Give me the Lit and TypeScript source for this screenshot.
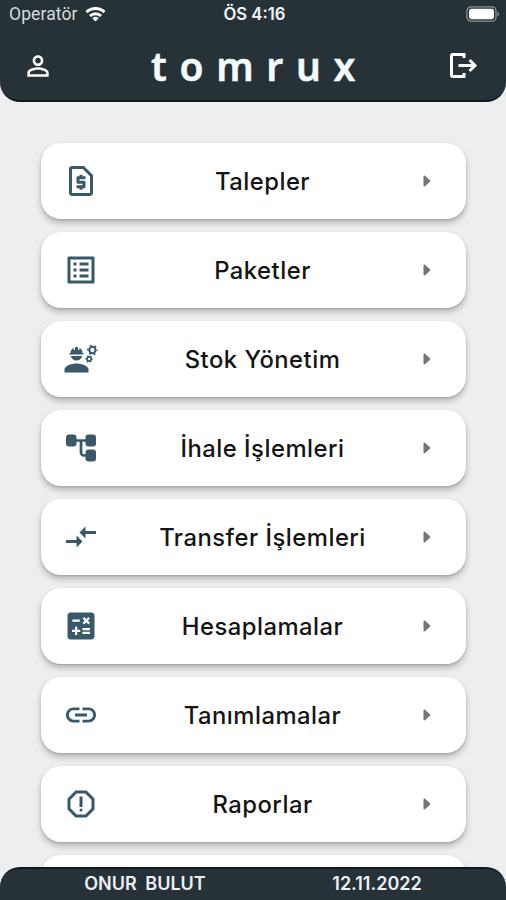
import { LitElement, html, svg, css } from "lit";
import { customElement } from "lit/decorators.js";

const ICONS: Record<string, unknown> = {
  request: svg`<path d="M14 2H6c-1.1 0-1.99.9-1.99 2L4 20c0 1.1.89 2 1.99 2H18c1.1 0 2-.9 2-2V8l-6-6zM6 20V4h7.17L18 8.83V20H6z"/><path transform="translate(0 -1.2)" d="M11 19h2v-1h1c.55 0 1-.45 1-1v-3c0-.55-.45-1-1-1h-3v-1h4v-2h-2V9h-2v1h-1c-.55 0-1 .45-1 1v3c0 .55.45 1 1 1h3v1H9v2h2v1z"/>`,
  list: svg`<path d="M19 5v14H5V5h14m1.1-2H3.9c-.5 0-.9.4-.9.9v16.2c0 .4.4.9.9.9h16.2c.4 0 .9-.5.9-.9V3.9c0-.5-.5-.9-.9-.9zM11 7h6v2h-6V7zm0 4h6v2h-6v-2zm0 4h6v2h-6zM7 7h2v2H7zm0 4h2v2H7zm0 4h2v2H7z"/>`,
  engineer: svg`<path d="M9 15c-2.67 0-8 1.34-8 4v2h16v-2c0-2.66-5.33-4-8-4z"/>
    <path d="M4.74 9h8.52c.27 0 .49-.22.49-.49v-.02c0-.27-.22-.49-.49-.49H13c0-1.48-.81-2.75-2-3.45v.95a.5.5 0 0 1-1 0V4.14C9.68 4.06 9.35 4 9 4s-.68.06-1 .14V5.5a.5.5 0 0 1-1 0v-.95C5.81 5.25 5 6.52 5 8h-.26c-.27 0-.49.22-.49.49v.03c0 .26.22.48.49.48z"/>
    <path d="M9 13c1.86 0 3.41-1.28 3.86-3H5.14c.45 1.72 2 3 3.86 3z"/>
    <g fill="none" stroke="currentColor"><circle cx="19.6" cy="6" r="2.1" stroke-width="1.35"/><circle cx="19.6" cy="6" r="3.1" stroke-width="1" stroke-dasharray="1.25 1.996" stroke-dashoffset=".6"/>
    <circle cx="17.4" cy="12" r="1.4" stroke-width="1.1"/><circle cx="17.4" cy="12" r="2.15" stroke-width=".8" stroke-dasharray=".95 1.3" stroke-dashoffset=".5"/></g>`,
  tree: svg`<rect x="2" y="3" width="7" height="8" rx="2"/><rect x="15" y="3" width="7" height="8" rx="2"/><rect x="15" y="13" width="7" height="8" rx="2"/>
    <path d="M8.5 7h7M12 7v8c0 1.1.9 2 2 2h1.5" fill="none" stroke="currentColor" stroke-width="1.8"/>`,
  transfer: svg`<path d="M9.01 14H2v2h7.01v3L13 15l-3.99-4v3zm5.98-1v-3H22V8h-7.01V5L11 9l3.99 4z"/>`,
  calc: svg`<path d="M19 3H5c-1.1 0-2 .9-2 2v14c0 1.1.9 2 2 2h14c1.1 0 2-.9 2-2V5c0-1.1-.9-2-2-2zm-5.97 4.06L14.09 6l1.41 1.41L16.91 6l1.06 1.06-1.41 1.41 1.41 1.41-1.06 1.06-1.41-1.4-1.41 1.41-1.06-1.06 1.41-1.41-1.41-1.42zm-6.78.66h5v1.5h-5v-1.5zM11.5 16h-2v2H8v-2H6v-1.5h2v-2h1.5v2h2V16zm6.5 1.25h-5v-1.5h5v1.5zm0-2.5h-5v-1.5h5v1.5z"/>`,
  link: svg`<path d="M3.9 12c0-1.71 1.39-3.1 3.1-3.1h4V7H7c-2.76 0-5 2.24-5 5s2.24 5 5 5h4v-1.9H7c-1.71 0-3.1-1.39-3.1-3.1zM8 13h8v-2H8v2zm9-6h-4v1.9h4c1.71 0 3.1 1.39 3.1 3.1s-1.39 3.1-3.1 3.1h-4V17h4c2.76 0 5-2.24 5-5s-2.24-5-5-5z"/>`,
  report: svg`<path d="M15.73 3H8.27L3 8.27v7.46L8.27 21h7.46L21 15.73V8.27L15.73 3zM19 14.9L14.9 19H9.1L5 14.9V9.1L9.1 5h5.8L19 9.1v5.8z"/><circle cx="12" cy="16" r="1"/><path d="M11 7h2v7h-2z"/>`,
};

const MENU = [
  { icon: "request", label: "Talepler" },
  { icon: "list", label: "Paketler" },
  { icon: "engineer", label: "Stok Yönetim" },
  { icon: "tree", label: "İhale İşlemleri" },
  { icon: "transfer", label: "Transfer İşlemleri" },
  { icon: "calc", label: "Hesaplamalar" },
  { icon: "link", label: "Tanımlamalar" },
  { icon: "report", label: "Raporlar" },
  { icon: "", label: "" },
];

@customElement("app-root")
export class AppRoot extends LitElement {
  static styles = css`
    :host { display: flex; flex-direction: column; width: 506px; height: 900px; overflow: hidden; background: #eceef0; font-family: Inter, "Liberation Sans", sans-serif; }
    svg { display: block; fill: currentColor; }
    .top { flex: none; box-sizing: border-box; height: 102px; background: #263238; color: #fff; border-bottom: 2px solid #10191e; border-radius: 0 0 20px 20px; }
    .status { display: grid; grid-template-columns: 1fr auto 1fr; align-items: center; height: 28px; padding: 0 6px 0 9px; }
    .carrier { display: flex; align-items: center; gap: 7px; color: #d8dcde; font-family: Roboto, sans-serif; font-size: 17.5px; letter-spacing: .1px; }
    .wifi { color: #fff; }
    .time { font-weight: 600; font-size: 16.7px; color: #f2f4f5; }
    .battery { justify-self: end; }
    .bar { display: flex; align-items: center; justify-content: space-between; box-sizing: border-box; height: 74px; padding: 2px 28px 0 22px; }
    .logo { padding-left: 17px; font-family: "Noto Sans", sans-serif; font-weight: 600; font-size: 39px; line-height: 40px; letter-spacing: 12.7px; color: #f3fbfc; -webkit-text-stroke: .5px #f3fbfc; }
    .list { flex: 1; min-height: 0; overflow: hidden; display: flex; flex-direction: column; gap: 13px; padding: 41px 40px 0 41px; }
    .card { flex: none; box-sizing: border-box; height: 76px; display: grid; grid-template-columns: 36px 1fr 18px; align-items: center; padding: 0 30px 0 22px; background: #fff; border-radius: 20px; box-shadow: 0 4px 6px rgba(0,0,0,.24), 0 1px 2px rgba(0,0,0,.14); }
    .icon { color: #37596a; }
    .label { padding-left: 8px; text-align: center; font-size: 23.8px; font-weight: 500; letter-spacing: .5px; color: #141414; white-space: nowrap; }
    .arrow { justify-self: center; color: #757575; }
    .bottom { flex: none; box-sizing: border-box; height: 33px; display: grid; grid-template-columns: 232px 232px; align-items: center; padding: 0 0 2px 29px; background: #263238; border-top: 2px solid #10191e; border-radius: 20px 20px 0 0; color: #eceff4; font-size: 18px; font-weight: 600; text-align: center; z-index: 1; }
    .user { word-spacing: 4px; }
  `;

  render() {
    return html`
      <header class="top">
        <div class="status">
          <div class="carrier">Operatör
            <svg class="wifi" width="21" height="16" viewBox="0 0 21 16"><g fill="none" stroke="currentColor" stroke-width="3"><path d="M1.5 6.2a13 13 0 0 1 18 0"/><path d="M5 10a8 8 0 0 1 11 0"/></g><path d="M7.3 12.2a4.7 4.7 0 0 1 6.4 0l-3.2 3.3z"/></svg>
          </div>
          <div class="time">ÖS 4:16</div>
          <svg class="battery" width="34" height="16" viewBox="0 0 34 16"><rect x="1" y=".8" width="29" height="14.4" rx="4" fill="none" stroke="#8d9599" stroke-width="1.3"/><rect x="3" y="2.8" width="25" height="10.4" rx="2.4"/><path d="M31.5 5.5c2 1 2 4 0 5z" fill="#8d9599"/></svg>
        </div>
        <div class="bar">
          <svg width="32" height="32" viewBox="0 0 24 24"><path d="M12 5.9c1.16 0 2.1.94 2.1 2.1s-.94 2.1-2.1 2.1S9.9 9.16 9.9 8s.94-2.1 2.1-2.1m0 9c2.97 0 6.1 1.46 6.1 2.1v1.1H5.9V17c0-.64 3.13-2.1 6.1-2.1M12 4C9.79 4 8 5.79 8 8s1.79 4 4 4 4-1.79 4-4-1.79-4-4-4zm0 9c-2.67 0-8 1.34-8 4v3h16v-3c0-2.66-5.33-4-8-4z"/></svg>
          <div class="logo">tomrux</div>
          <svg width="30" height="28" viewBox="0 0 30 28"><g fill="none" stroke="#fff" stroke-width="3"><path d="M16 6V2.5H5A1.5 1.5 0 0 0 3.5 4v19A1.5 1.5 0 0 0 5 24.5H16V21M10.5 13.500H27M21.500 8l5.500 5.500-5.500 5.500"/></g></svg>
        </div>
      </header>
      <main class="list">
        ${MENU.map((m) => html`
          <div class="card">
            <svg class="icon" width="36" height="36" viewBox="0 0 24 24">${m.icon ? ICONS[m.icon] : ""}</svg>
            <span class="label">${m.label}</span>
            <svg class="arrow" width="8" height="12" viewBox="0 0 8 12"><path d="M.5 1.5C.5.3 1.6.2 2.3.9L7 5.2q.8.8 0 1.6L2.3 11.1C1.6 11.8.5 11.7.5 10.5z"/></svg>
          </div>`)}
      </main>
      <footer class="bottom"><span class="user">ONUR BULUT</span><span>12.11.2022</span></footer>
    `;
  }
}
